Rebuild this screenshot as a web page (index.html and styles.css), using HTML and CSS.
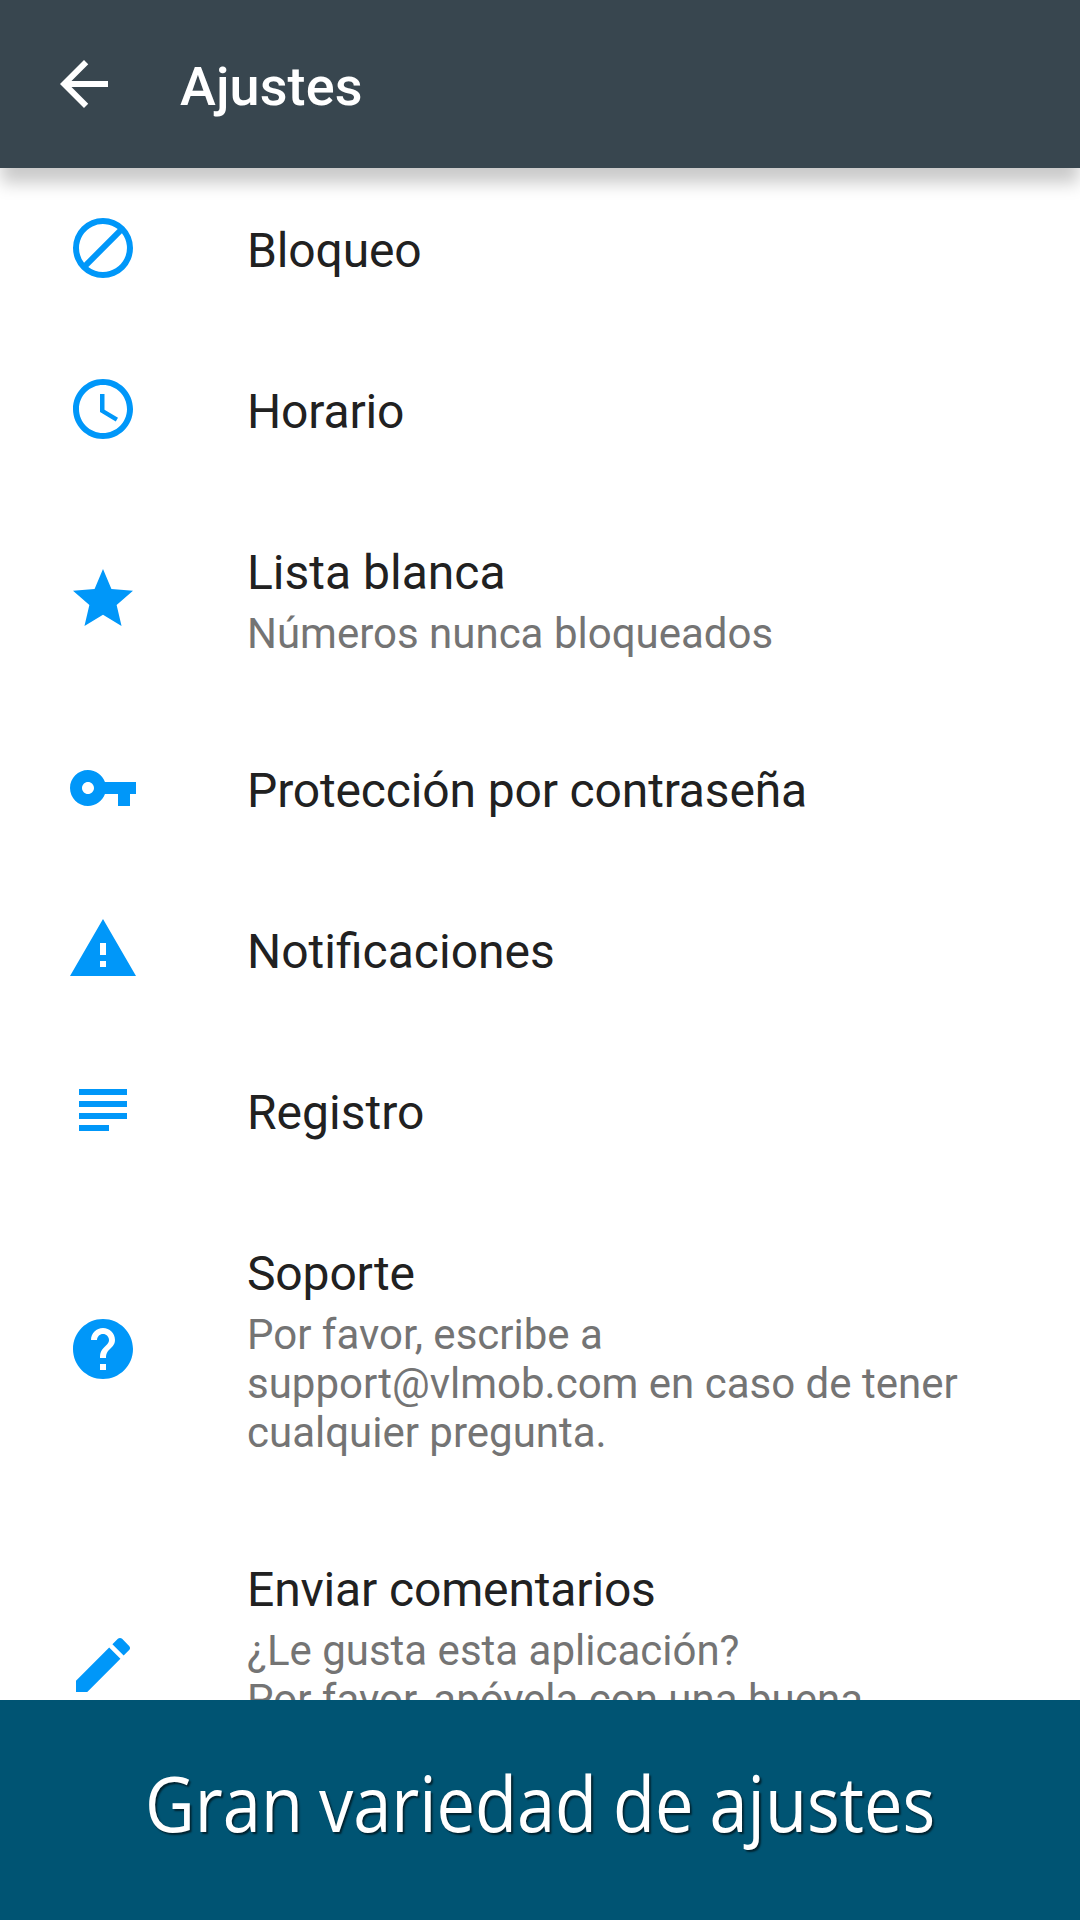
FILE: index.html
```html
<!DOCTYPE html>
<html lang="es">
<head>
<meta charset="utf-8">
<title>Ajustes</title>
<link rel="stylesheet" href="styles.css">
</head>
<body>
<div class="screen">
  <header class="appbar">
    <svg class="icon back" viewBox="0 0 24 24"><path d="M20 11H7.83l5.59-5.59L12 4l-8 8 8 8 1.41-1.41L7.83 13H20v-2z"/></svg>
    <h1 class="heading">Ajustes</h1>
  </header>
  <main class="list">
    <div class="row">
      <svg class="icon" viewBox="0 0 24 24"><path fill-rule="evenodd" d="M12 2a10 10 0 1 0 0 20 10 10 0 0 0 0-20zM4 12a8 8 0 0 1 12.9-6.31L5.69 16.9A7.9 7.9 0 0 1 4 12zm8 8a7.9 7.9 0 0 1-4.9-1.69L18.31 7.1A8 8 0 0 1 12 20z"/></svg>
      <div class="text"><div class="title title-tight">Bloqueo</div></div>
    </div>
    <div class="row">
      <svg class="icon" viewBox="0 0 24 24"><path d="M11.99 2C6.47 2 2 6.48 2 12s4.47 10 9.99 10C17.52 22 22 17.52 22 12S17.52 2 11.99 2zM12 20c-4.42 0-8-3.58-8-8s3.58-8 8-8 8 3.58 8 8-3.58 8-8 8zm.5-13H11v6l5.25 3.15.75-1.23-4.5-2.67z"/></svg>
      <div class="text"><div class="title title-tight">Horario</div></div>
    </div>
    <div class="row">
      <svg class="icon" viewBox="0 0 24 24"><path d="M12 17.27L18.18 21l-1.64-7.03L22 9.24l-7.19-.61L12 2 9.19 8.63 2 9.24l5.46 4.73L5.82 21z"/></svg>
      <div class="text"><div class="title">Lista blanca</div><div class="summary">Números nunca bloqueados</div></div>
    </div>
    <div class="row">
      <svg class="icon" viewBox="0 0 24 24"><path d="M12.65 10C11.83 7.67 9.61 6 7 6c-3.31 0-6 2.69-6 6s2.69 6 6 6c2.61 0 4.83-1.67 5.65-4H17v4h4v-4h2v-4H12.65zM7 14c-1.1 0-2-.9-2-2s.9-2 2-2 2 .9 2 2-.9 2-2 2z"/></svg>
      <div class="text"><div class="title title-tight">Protección por contraseña</div></div>
    </div>
    <div class="row">
      <svg class="icon" viewBox="0 0 24 24"><path d="M1 21h22L12 2 1 21zm12-3h-2v-2h2v2zm0-4h-2v-4h2v4z"/></svg>
      <div class="text"><div class="title">Notificaciones</div></div>
    </div>
    <div class="row">
      <svg class="icon" viewBox="0 0 24 24"><path d="M14 17H4v2h10v-2zm6-8H4v2h16V9zM4 15h16v-2H4v2zM4 5v2h16V5H4z"/></svg>
      <div class="text"><div class="title">Registro</div></div>
    </div>
    <div class="row">
      <svg class="icon" viewBox="0 0 24 24"><path d="M12 2C6.48 2 2 6.48 2 12s4.48 10 10 10 10-4.48 10-10S17.52 2 12 2zm1 17h-2v-2h2v2zm2.07-7.75l-.9.92C13.45 12.9 13 13.5 13 15h-2v-.5c0-1.1.45-2.1 1.17-2.83l1.24-1.26c.37-.36.59-.86.59-1.41 0-1.1-.9-2-2-2s-2 .9-2 2H8c0-2.21 1.79-4 4-4s4 1.79 4 4c0 .88-.36 1.68-.93 2.25z"/></svg>
      <div class="text"><div class="title title-tight">Soporte</div><div class="summary">Por favor, escribe a<br>support@vlmob.com en caso de tener<br>cualquier pregunta.</div></div>
    </div>
    <div class="row row-last">
      <svg class="icon" viewBox="0 0 24 24"><path d="M3 17.25V21h3.75L17.81 9.94l-3.75-3.75L3 17.25zM20.71 7.04c.39-.39.39-1.02 0-1.41l-2.34-2.34c-.39-.39-1.02-.39-1.41 0l-1.83 1.83 3.75 3.75 1.83-1.83z"/></svg>
      <div class="text"><div class="title title-tight">Enviar comentarios</div><div class="summary">¿Le gusta esta aplicación?<br>Por favor, apóyela con una buena</div></div>
    </div>
  </main>
  <footer class="banner"><span class="caption">Gran variedad de ajustes</span></footer>
</div>
</body>
</html>
```
FILE: styles.css
```css
* { box-sizing: border-box; }

body {
  margin: 0;
  background: #fff;
  font-family: Roboto, sans-serif;
}

.screen {
  display: flex;
  flex-direction: column;
  width: 1080px;
  height: 1920px;
  overflow: hidden;
}

.appbar {
  display: flex;
  flex: none;
  align-items: center;
  gap: 60px;
  height: 168px;
  padding-left: 48px;
  background: #38464f;
  box-shadow: 0 16px 16px -1px rgba(0, 0, 0, 0.21);
  z-index: 1;
}

.heading {
  margin: 6px 0 0;
  color: #fff;
  font-size: 54px;
  font-weight: 500;
  letter-spacing: 0.1px;
  line-height: 64px;
}

.icon {
  flex: none;
  width: 72px;
  height: 72px;
  fill: #0097f9;
}

.back { fill: #fff; }

.list {
  flex: 1;
  min-height: 0;
  overflow: hidden;
}

.row {
  display: flex;
  align-items: center;
  gap: 108px;
  padding-left: 67px;
}

.row .icon { margin-bottom: 1px; }

.row-last { height: 316px; }

.row-last .text { align-self: flex-start; }

.text { padding: 54px 0 50px; }

.title {
  color: #212121;
  font-size: 48px;
  line-height: 57px;
}

.title-tight { letter-spacing: -0.15px; }

.summary {
  margin-top: 8px;
  color: #747474;
  font-size: 42px;
  line-height: 49px;
}

.banner {
  display: flex;
  flex: none;
  justify-content: center;
  height: 220px;
  padding-top: 51px;
  background: #005473;
}

.caption {
  color: #fff;
  font-family: "Open Sans", sans-serif;
  font-size: 76px;
  line-height: 104px;
  white-space: nowrap;
  word-spacing: -2px;
  text-shadow: 2px 2px 2px rgba(0, 0, 0, 0.6);
  transform: scaleX(0.902);
}
```
